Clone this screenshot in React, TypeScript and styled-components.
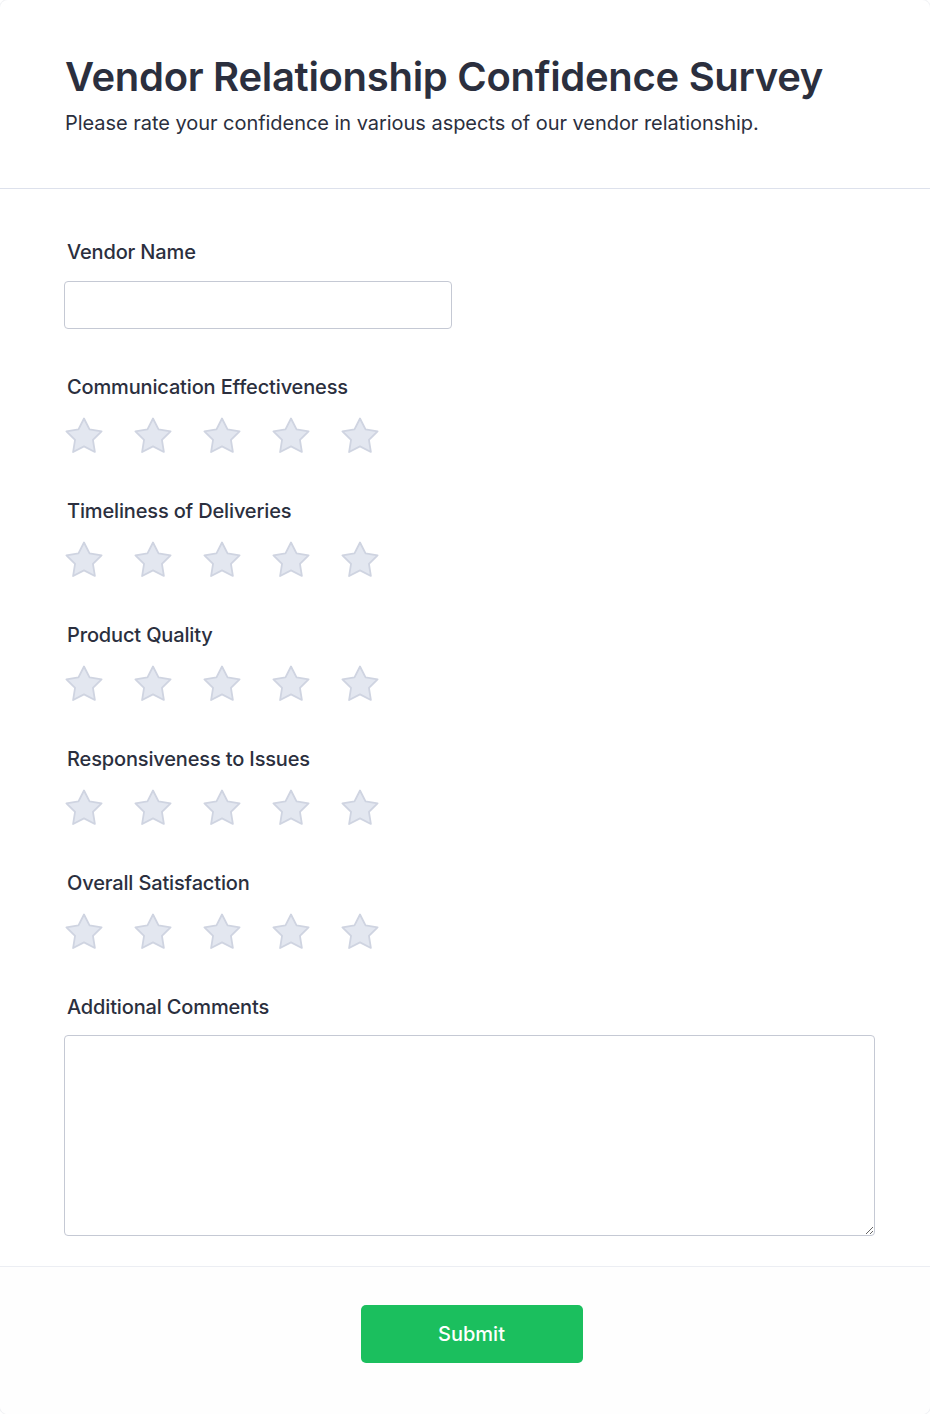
import React from "react";
import styled, { createGlobalStyle } from "styled-components";

const GlobalStyle = createGlobalStyle`
  html, body {
    margin: 0;
    padding: 0;
    background: #ffffff;
  }
  body {
    font-family: Inter, "Noto Sans", sans-serif;
    color: #2d3142;
  }
  * { box-sizing: border-box; }
`;

const Card = styled.div`
  width: 930px;
  min-height: 1414px;
  background: #ffffff;
  border-radius: 8px;
  box-shadow: 0 0 0 1px #f1f2f5, 0 1px 2px rgba(20, 30, 60, 0.04);
  display: flex;
  flex-direction: column;
  overflow: hidden;
`;

const Header = styled.header`
  padding: 53px 64px 52px 65px;
  border-bottom: 1px solid #dde1ec;
`;

const Title = styled.h1`
  margin: 0;
  font-size: 40px;
  line-height: 48px;
  font-weight: 600;
  color: #2b2f3e;
  letter-spacing: -0.3px;
`;

const Subtitle = styled.p`
  margin: 9px 0 0;
  font-size: 20px;
  line-height: 26px;
  font-weight: 400;
  color: #2b2f3e;
  letter-spacing: -0.04px;
`;

const Body = styled.form`
  padding: 51px 55px 30px 64px;
  display: flex;
  flex-direction: column;
`;

const Field = styled.div<{ $after: number }>`
  display: flex;
  flex-direction: column;
  align-items: flex-start;
  margin-bottom: ${(p) => p.$after}px;
`;

const Label = styled.label<{ $gap: number }>`
  display: block;
  font-size: 20px;
  line-height: 24px;
  font-weight: 500;
  color: #2b2f3e;
  letter-spacing: -0.15px;
  padding-left: 3px;
  margin-bottom: ${(p) => p.$gap}px;
`;

const TextInput = styled.input`
  width: 388px;
  height: 48px;
  border: 1px solid #c5c9d4;
  border-radius: 4px;
  padding: 0 12px;
  font-family: inherit;
  font-size: 16px;
  outline: none;
  background: #fff;
`;

const Stars = styled.div`
  display: flex;
  gap: 31px;
  padding-left: 1px;
`;

const StarButton = styled.button`
  width: 38px;
  height: 38px;
  padding: 0;
  border: none;
  background: none;
  cursor: pointer;
  display: block;
  svg {
    display: block;
    overflow: visible;
  }
`;

const TextArea = styled.textarea`
  width: 100%;
  height: 201px;
  border: 1px solid #c5c9d4;
  border-radius: 4px;
  padding: 10px 12px;
  font-family: inherit;
  font-size: 16px;
  outline: none;
  resize: vertical;
  display: block;
`;

const Footer = styled.div`
  border-top: 1px solid #eceef3;
  background: #fefefe;
  padding: 38px 0 50px 13px;
  display: flex;
  justify-content: center;
  flex: 1;
`;

const SubmitButton = styled.button`
  width: 222px;
  height: 58px;
  border: none;
  border-radius: 5px;
  background: #1bbf5e;
  color: #ffffff;
  font-family: inherit;
  font-size: 20px;
  font-weight: 500;
  cursor: pointer;
`;

const STAR_POINTS = (() => {
  const cx = 19;
  const cy = 20;
  const R = 18.5;
  const r = 9.4;
  const pts: string[] = [];
  for (let k = 0; k < 10; k++) {
    const a = (k * 36 * Math.PI) / 180;
    const rad = k % 2 === 0 ? R : r;
    pts.push(`${(cx + rad * Math.sin(a)).toFixed(2)},${(cy - rad * Math.cos(a)).toFixed(2)}`);
  }
  return pts.join(" ");
})();

const Star: React.FC = () => (
  <StarButton type="button" aria-label="star">
    <svg width="38" height="38" viewBox="0 0 38 38">
      <polygon
        points={STAR_POINTS}
        fill="#e3e7f0"
        stroke="#cfd4e1"
        strokeWidth="1.8"
        strokeLinejoin="round"
      />
    </svg>
  </StarButton>
);

const ratings = [
  "Communication Effectiveness",
  "Timeliness of Deliveries",
  "Product Quality",
  "Responsiveness to Issues",
  "Overall Satisfaction",
];

export default function App() {
  return (
    <>
      <GlobalStyle />
      <Card>
        <Header>
          <Title>Vendor Relationship Confidence Survey</Title>
          <Subtitle>
            Please rate your confidence in various aspects of our vendor relationship.
          </Subtitle>
        </Header>
        <Body onSubmit={(e) => e.preventDefault()}>
          <Field $after={46}>
            <Label $gap={17}>Vendor Name</Label>
            <TextInput type="text" />
          </Field>
          {ratings.map((r) => (
            <Field key={r} $after={44}>
              <Label $gap={18}>{r}</Label>
              <Stars>
                {[0, 1, 2, 3, 4].map((i) => (
                  <Star key={i} />
                ))}
              </Stars>
            </Field>
          ))}
          <Field $after={0}>
            <Label $gap={16}>Additional Comments</Label>
            <TextArea />
          </Field>
        </Body>
        <Footer>
          <SubmitButton type="submit">Submit</SubmitButton>
        </Footer>
      </Card>
    </>
  );
}
